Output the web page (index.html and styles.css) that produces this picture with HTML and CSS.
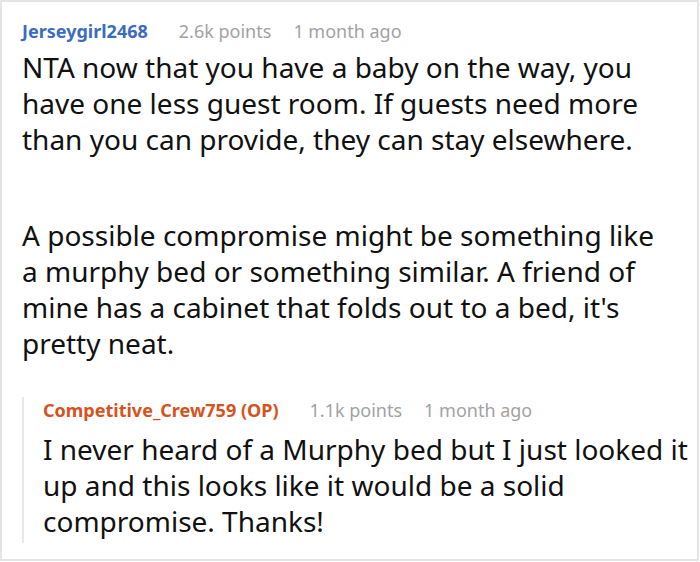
FILE: index.html
```html
<!DOCTYPE html>
<html>
<head>
<meta charset="utf-8">
<link rel="stylesheet" href="styles.css">
</head>
<body>
<div class="card">
  <div class="comment">
    <div class="meta">
      <span class="user">Jerseygirl2468</span>
      <span class="info">2.6k points</span>
      <span class="info">1 month ago</span>
    </div>
    <div class="text main">
      <p>NTA now that you have a baby on the way, you have one less guest room. If guests need more than you can provide, they can stay elsewhere.</p>
      <p>A possible compromise might be something like a murphy bed or something similar. A friend of mine has a cabinet that folds out to a bed, it's pretty neat.</p>
    </div>
    <div class="reply">
      <div class="meta">
        <span class="user op">Competitive_Crew759 (OP)</span>
        <span class="info">1.1k points</span>
        <span class="info">1 month ago</span>
      </div>
      <div class="text sub">
        <p>I never heard of a Murphy bed but I just looked it up and this looks like it would be a solid compromise. Thanks!</p>
      </div>
    </div>
  </div>
</div>
</body>
</html>
```
FILE: styles.css
```css
html, body {
  margin: 0;
  padding: 0;
  background: #fff;
}
body {
  font-family: "Noto Sans", "Open Sans", sans-serif;
  color: #111;
}
.card {
  width: 699px;
  height: 561px;
  box-sizing: border-box;
  border: 2px solid #e4e4e4;
  overflow: hidden;
}
.comment {
  padding: 16px 8px 0 20px;
}
.meta {
  display: flex;
  align-items: baseline;
  gap: 22px;
  font-size: 18px;
  line-height: 26px;
}
.user {
  font-weight: 700;
  color: #3b6cbf;
  margin-right: 9px;
}
.user.op {
  color: #d6521e;
}
.info {
  color: #a2a2a2;
}
.text {
  font-size: 28px;
  line-height: 36px;
  margin-top: 5px;
}
.text.main {
  max-width: 640px;
}
.text.sub {
  margin-top: 8px;
}
.text p {
  margin: 0;
}
.text p + p {
  margin-top: 60px;
}
.reply {
  margin-top: 36px;
  border-left: 2px solid #e8e8e8;
  padding-left: 19px;
  padding-bottom: 4px;
}
```
